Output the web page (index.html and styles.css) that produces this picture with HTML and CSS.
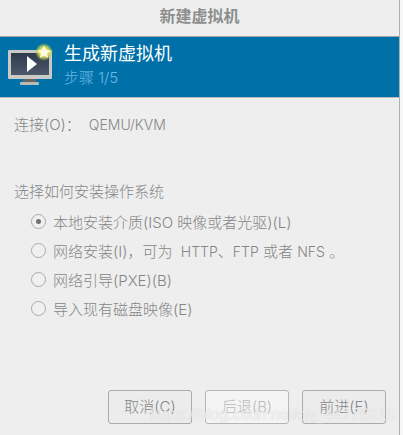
FILE: index.html
```html
<!DOCTYPE html>
<html lang="zh-CN">
<head>
  <meta charset="UTF-8" />
  <title>新建虚拟机</title>
  <link rel="stylesheet" href="styles.css">
</head>
<body>

<div class="window">
  <div class="titlebar">新建虚拟机</div>

  <div class="banner">
    <svg class="banner-icon" width="48" height="44" viewBox="0 0 48 44">
      <defs>
        <radialGradient id="glow">
          <stop offset="0.35" stop-color="#fff176"/>
          <stop offset="0.7" stop-color="#d8e04a" stop-opacity="0.7"/>
          <stop offset="1" stop-color="#8fc04a" stop-opacity="0"/>
        </radialGradient>
        <linearGradient id="screen" x1="0" y1="0" x2="0" y2="1">
          <stop offset="0" stop-color="#2f3a4c"/>
          <stop offset="1" stop-color="#4d586a"/>
        </linearGradient>
      </defs>
      <rect x="0" y="7" width="44" height="29" rx="1" fill="#c9c9c6"/>
      <rect x="3" y="10" width="38" height="22" fill="url(#screen)"/>
      <rect x="15" y="36" width="13" height="3" fill="#66655f"/>
      <rect x="12" y="39" width="19" height="3" rx="1" fill="#b9b9b5"/>
      <polygon points="19,13 29,21 19,29" fill="#ffffff"/>
      <circle cx="36" cy="9" r="9" fill="url(#glow)"/>
      <polygon points="36,2.5 38,7 42.5,7.5 39,10.5 40.2,15 36,12.6 31.8,15 33,10.5 29.5,7.5 34,7" fill="#fffbe0"/>
    </svg>
    <div class="banner-text">
      <div class="banner-title">生成新虚拟机</div>
      <div class="banner-step">步骤 1/5</div>
    </div>
  </div>

  <div class="content">
    <div class="connection">
      <span>连接(O)：</span>
      <span class="connection-value">QEMU/KVM</span>
    </div>

    <div class="install-label">选择如何安装操作系统</div>

    <div class="radio-group">
      <label class="radio-row"><span class="radio checked"></span><span>本地安装介质(ISO 映像或者光驱)(L)</span></label>
      <label class="radio-row"><span class="radio"></span><span>网络安装(I)，可为&nbsp; <span class="latin">HTTP</span>、<span class="latin">FTP</span> 或者 <span class="latin">NFS</span> 。</span></label>
      <label class="radio-row"><span class="radio"></span><span>网络引导(PXE)(B)</span></label>
      <label class="radio-row"><span class="radio"></span><span>导入现有磁盘映像(E)</span></label>
    </div>
  </div>

  <div class="buttons">
    <button class="btn">取消(C)</button>
    <button class="btn btn-disabled">后退(B)</button>
    <button class="btn">前进(F)</button>
  </div>
</div>

<div class="watermark">https://blog.csdn.net/qq_44776215</div>

</body>
</html>
```

FILE: styles.css
```css
html, body { margin: 0; height: 100%; }
body {
  background: #f7f7f7;
  font-family: "Inter", "Noto Sans CJK SC", sans-serif;
  font-size: 15px;
  font-weight: 300;
  color: #858787;
  overflow: hidden;
}
.window {
  width: 400px;
  height: 435px;
  box-sizing: border-box;
  background: #eeeeee;
  border-right: 1px solid #b0b0b0;
  display: flex;
  flex-direction: column;
}
.titlebar {
  height: 36px;
  line-height: 33px;
  text-align: center;
  font-weight: bold;
  font-size: 16px;
  color: #8c8e8e;
  border-bottom: 1px solid #a4a4a4;
}
.banner {
  height: 60px;
  background: #0071a8;
  border-bottom: 1px solid #b8bcbe;
  display: flex;
  align-items: flex-start;
}
.banner-icon { margin: 6px 0 0 8px; }
.banner-text { margin-left: 8px; }
.banner-title {
  color: #ffffff;
  font-size: 18px;
  font-weight: 400;
  line-height: 24px;
  margin-top: 5px;
}
.banner-step {
  color: #6bb8e4;
  font-size: 15px;
  line-height: 20px;
  margin-top: 2px;
}
.content { flex: 1; padding: 0 14px; }
.connection {
  margin-top: 16px;
  line-height: 22px;
  display: flex;
  gap: 8px;
}
.connection-value { font-size: 14px; }
.install-label { margin-top: 45px; line-height: 22px; }
.radio-group {
  margin: 7px 0 0 17px;
  display: flex;
  flex-direction: column;
  gap: 7px;
}
.radio-row {
  display: flex;
  align-items: center;
  gap: 7px;
  height: 22px;
  white-space: nowrap;
}
.latin { font-size: 14px; }
.radio {
  width: 13px;
  height: 13px;
  border: 1px solid #a9abab;
  border-radius: 50%;
  background: #f0f0f0;
  display: flex;
  align-items: center;
  justify-content: center;
}
.radio.checked::after {
  content: "";
  width: 5px;
  height: 5px;
  border-radius: 50%;
  background: #6f7272;
}
.buttons {
  display: flex;
  justify-content: flex-end;
  gap: 13px;
  padding: 0 13px 11px 0;
}
.btn {
  width: 84px;
  height: 34px;
  padding: 0 0 4px;
  font: inherit;
  color: #858787;
  background: #ececec;
  border: 1px solid #ababab;
  border-radius: 3px;
}
.btn-disabled { background: #f4f4f4; color: #b9bbbb; border-color: #b6b6b6; }
.watermark {
  position: absolute;
  left: 150px;
  top: 406px;
  font-family: "Liberation Sans", sans-serif;
  font-size: 16px;
  font-weight: 400;
  color: rgba(255, 255, 255, 0.75);
  text-shadow: 0 0 1px rgba(0, 0, 0, 0.2);
  white-space: nowrap;
}
```
